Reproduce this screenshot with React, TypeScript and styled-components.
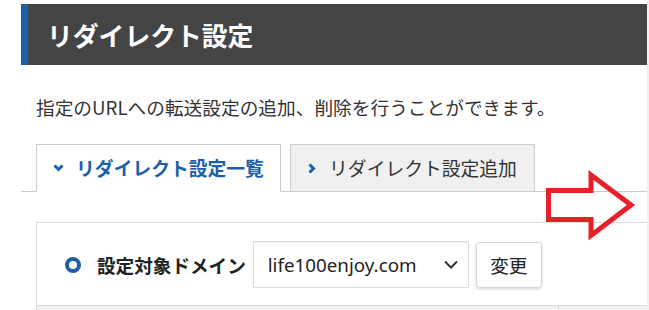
import React from "react";
import styled, { createGlobalStyle } from "styled-components";

const GlobalStyle = createGlobalStyle`
	html, body {
		margin: 0;
		padding: 0;
		background: #f1f1f1;
	}
	body {
		font-family: "Noto Sans", "Noto Sans CJK JP", sans-serif;
		color: #333;
	}
`;

const BLUE = "#1d5fa8";

const Page = styled.div`
	position: relative;
	width: 647px;
	height: 310px;
	overflow: hidden;
	background: #fff;
	padding: 4px 0 0 21px;
	box-sizing: border-box;
`;

const Header = styled.div`
	height: 61px;
	background: #444;
	border-left: 7px solid ${BLUE};
	display: flex;
	align-items: center;
	padding-left: 19px;

	h1 {
		margin: 0;
		font-family: "Noto Sans CJK JP", sans-serif;
		font-size: 25.8px;
		font-weight: 700;
		line-height: 30px;
		color: #fff;
	}
`;

const Lead = styled.p`
	margin: 29px 0 0 15px;
	font-family: "Noto Sans CJK JP", sans-serif;
	font-size: 18.7px;
	line-height: 26px;
	color: #333;
`;

const TabBar = styled.div`
	display: flex;
	gap: 9px;
	margin-top: 24px;
	padding-left: 15px;
	border-bottom: 1px solid #ccc;
`;

const Tab = styled.div<{ $active?: boolean }>`
	width: 245px;
	height: 48px;
	margin-bottom: -1px;
	box-sizing: border-box;
	display: flex;
	align-items: center;
	justify-content: center;
	gap: ${(p) => (p.$active ? 12 : 13)}px;
	border: 1px solid #ccc;
	border-bottom-color: ${(p) => (p.$active ? "#fff" : "#ccc")};
	background: ${(p) => (p.$active ? "#fff" : "#f0f0f0")};
	font-family: "Noto Sans CJK JP", sans-serif;
	font-size: 18.8px;
	font-weight: ${(p) => (p.$active ? 700 : 400)};
	color: ${(p) => (p.$active ? BLUE : "#333")};
	line-height: 24px;
`;

const Panel = styled.div`
	margin: 30px 0 0 15px;
	border: 1px solid #ddd;
	border-right: none;
`;

const DomainRow = styled.div`
	display: flex;
	align-items: center;
	padding: 18px 0 17px 28px;
`;

const Radio = styled.span`
	width: 16px;
	height: 16px;
	box-sizing: border-box;
	border: 4px solid ${BLUE};
	border-radius: 50%;
	margin-right: 16px;
`;

const Label = styled.span`
	font-family: "Noto Sans CJK JP", sans-serif;
	font-size: 18.6px;
	font-weight: 700;
	color: #222;
	margin-right: 7px;
	line-height: 24px;
`;

const Select = styled.div`
	width: 216px;
	height: 47px;
	box-sizing: border-box;
	border: 1px solid #ddd;
	box-shadow: inset 0 4px 3px -2px rgba(0, 0, 0, 0.05);
	display: flex;
	align-items: center;
	justify-content: space-between;
	padding: 0 10px 0 14px;
	font-family: "Noto Sans", sans-serif;
	font-size: 18.8px;
	color: #222;
	margin-right: 7px;
`;

const Button = styled.button`
	width: 66px;
	height: 46px;
	box-sizing: border-box;
	background: #fff;
	border: 1px solid #d6d6d6;
	border-radius: 4px;
	box-shadow: 0 1px 3px rgba(0, 0, 0, 0.18);
	font-family: "Noto Sans CJK JP", sans-serif;
	font-size: 18.6px;
	color: #222;
	padding: 0;
`;

const TableHead = styled.div`
	display: flex;
	height: 30px;
	background: #f2f2f2;
	border-top: 1px solid #ddd;
`;

const HeadCell = styled.div<{ $w?: number }>`
	width: ${(p) => (p.$w ? `${p.$w}px` : "auto")};
	flex: ${(p) => (p.$w ? "none" : 1)};
	border-right: ${(p) => (p.$w ? "1px solid #ddd" : "none")};
`;

const Annotation = styled.svg`
	position: absolute;
	left: 0;
	top: 0;
	pointer-events: none;
`;

const ChevronDown = () => (
	<svg width="11" height="8" viewBox="0 0 11 8">
		<path d="M1.5 1.5 L5.5 5.5 L9.5 1.5" fill="none" stroke={BLUE} strokeWidth="3" />
	</svg>
);

const ChevronRight = () => (
	<svg width="8" height="11" viewBox="0 0 8 11">
		<path d="M1.5 1.5 L5.5 5.5 L1.5 9.5" fill="none" stroke={BLUE} strokeWidth="3" />
	</svg>
);

const SelectArrow = () => (
	<svg width="14" height="9" viewBox="0 0 14 9">
		<path d="M1 1.5 L7 7.5 L13 1.5" fill="none" stroke="#333" strokeWidth="2" />
	</svg>
);

const App: React.FC = () => {
	return (
		<>
			<GlobalStyle />
			<Page>
				<Header>
					<h1>リダイレクト設定</h1>
				</Header>
				<Lead>指定のURLへの転送設定の追加、削除を行うことができます。</Lead>
				<TabBar>
					<Tab $active>
						<ChevronDown />
						リダイレクト設定一覧
					</Tab>
					<Tab>
						<ChevronRight />
						リダイレクト設定追加
					</Tab>
				</TabBar>
				<Panel>
					<DomainRow>
						<Radio />
						<Label>設定対象ドメイン</Label>
						<Select>
							life100enjoy.com
							<SelectArrow />
						</Select>
						<Button>変更</Button>
					</DomainRow>
					<TableHead>
						<HeadCell $w={521} />
						<HeadCell />
					</TableHead>
				</Panel>
				<Annotation width="647" height="310">
					<polygon
						points="548.5,190.5 591,190.5 591,175 631,205 591,235.5 591,219.5 548.5,219.5"
						fill="none"
						stroke="#e8202a"
						strokeWidth="5"
					/>
				</Annotation>
			</Page>
		</>
	);
};

export default App;
